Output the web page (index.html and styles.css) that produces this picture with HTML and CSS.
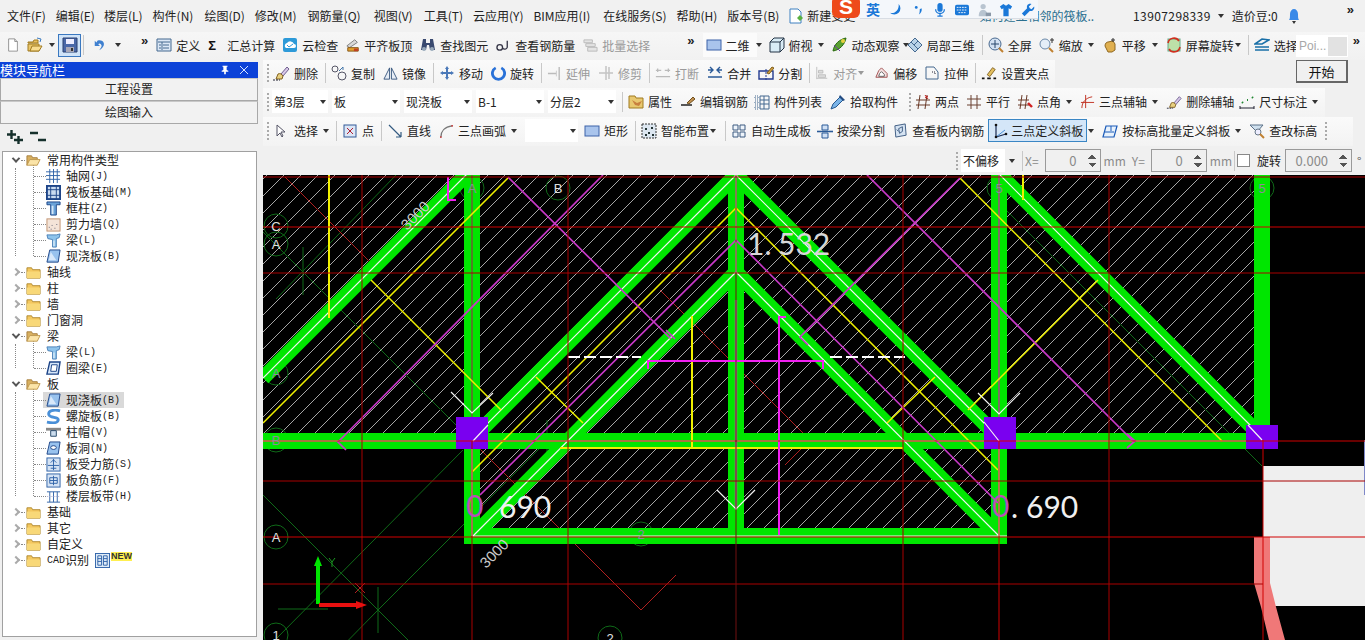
FILE: index.html
```html
<!DOCTYPE html>
<html lang="zh">
<head>
<meta charset="utf-8">
<title>钢筋算量</title>
<link rel="stylesheet" href="styles.css">
</head>
<body>
<svg class="defs" aria-hidden="true">
<defs>
<symbol id="new" viewBox="0 0 16 16"><path d="M3 1h7l3 3v11H3z" fill="#fff" stroke="#8a8a8a"/><path d="M10 1v3h3" fill="#ddd" stroke="#8a8a8a"/></symbol>
<symbol id="open" viewBox="0 0 16 16"><path d="M1 5h5l1-2h4v3H1z" fill="#e8c060" stroke="#a07a20"/><path d="M1 14V7h11v7z" fill="#eac66a" stroke="#a07a20"/><path d="M3 14l2-5h10l-3 5z" fill="#f8dc90" stroke="#a07a20"/><path d="M10 1l4 1-1 3" fill="none" stroke="#3a7ac0"/></symbol>
<symbol id="save" viewBox="0 0 16 16"><path d="M1 1h14v14H1z" fill="#4a68a8" stroke="#2a4070"/><path d="M4 2h8v5H4z" fill="#eef"/><path d="M4 10h8v5H4z" fill="#a8a8b8"/><path d="M9 11h2v3H9z" fill="#333"/></symbol>
<symbol id="undo" viewBox="0 0 16 16"><path d="M5 3c5-2 9 2 7 6-1 2-3 4-5 5 2-3 4-5 2-7-1-1-2-1-3 0l2 2H2V3l2 2z" fill="#3f80d0"/></symbol>
<symbol id="def" viewBox="0 0 16 16"><path d="M1 2h14v12H1z" fill="#dbe7f5" stroke="#44688f"/><path d="M2 5h12M6 5v8M7 8h6M7 11h6M3 8h2M3 11h2" stroke="#44688f"/></symbol>
<symbol id="cloud" viewBox="0 0 16 16"><rect x="1" y="1" width="14" height="14" rx="2" fill="#2d9ad8"/><path d="M3 10a3 3 0 0 1 2-4 4 4 0 0 1 7 1 2 2 0 0 1 0 4H4z" fill="#fff"/><path d="M5 8l2 2 4-3" stroke="#2d9ad8" fill="none"/></symbol>
<symbol id="level" viewBox="0 0 16 16"><path d="M1 9l9-7 3 3-9 6z" fill="#d8d8d8" stroke="#777"/><path d="M2 11h12v4H2z" fill="#e0a030" stroke="#805010"/><path d="M9 12h5v3H9z" fill="#c04020"/></symbol>
<symbol id="bino" viewBox="0 0 16 16"><path d="M3 2h3v4h4V2h3l2 11h-5l-1-5H7l-1 5H1z" fill="#3a4a70"/><circle cx="4" cy="12" r="2" fill="#9ab"/><circle cx="12" cy="12" r="2" fill="#9ab"/></symbol>
<symbol id="rebar" viewBox="0 0 16 16"><circle cx="4" cy="10" r="3" fill="none" stroke="#334" stroke-width="1.4"/><path d="M12 3v7a3 3 0 0 1-5 1" fill="none" stroke="#334" stroke-width="1.4"/></symbol>
<symbol id="batch" viewBox="0 0 16 16"><path d="M1 2h9v3H1zM3 6h10v3H3zM5 10h10v4H5z" fill="#e4e4e4" stroke="#bbb"/></symbol>
<symbol id="rect" viewBox="0 0 16 16"><rect x="1" y="3" width="14" height="10" fill="#a9c4ec" stroke="#3c62a8"/></symbol>
<symbol id="box" viewBox="0 0 16 16"><path d="M1 5l4-4h10v10l-4 4H1z" fill="#d9ecf6" stroke="#234"/><path d="M1 5h10v10M11 5l4-4" fill="none" stroke="#234"/></symbol>
<symbol id="orbit" viewBox="0 0 16 16"><path d="M1 14c1-7 7-12 13-13-1 6-6 12-13 13z" fill="#58a030" stroke="#2a6a10"/><circle cx="11" cy="4" r="2" fill="#e8d040"/><path d="M2 8l6 6" stroke="#7040a0"/></symbol>
<symbol id="local" viewBox="0 0 16 16"><path d="M1 8l7-7 7 7-7 7z" fill="#b9d3e8" stroke="#44688f"/><path d="M4 5l7 7M8 1l4 4M7 8l4-4" stroke="#44688f"/></symbol>
<symbol id="full" viewBox="0 0 16 16"><circle cx="7" cy="7" r="6" fill="#d4e2f2" stroke="#4a6a90"/><path d="M7 3v8M3 7h8" stroke="#29466a"/><path d="M11 11l4 4" stroke="#c08030" stroke-width="2"/></symbol>
<symbol id="zoom" viewBox="0 0 16 16"><circle cx="6" cy="7" r="5" fill="#e4eef8" stroke="#6a88a8"/><path d="M10 11l4 4" stroke="#c08030" stroke-width="2"/><path d="M13 1v5M11 3h4" stroke="#333"/></symbol>
<symbol id="pan" viewBox="0 0 16 16"><path d="M3 9c0-3 2-4 3-4l5-1 2 3v6l-3 2H6z" fill="#e0b050" stroke="#906820"/><path d="M11 1v4M9 3h4" stroke="#333"/></symbol>
<symbol id="srot" viewBox="0 0 16 16"><rect x="2" y="2" width="12" height="12" fill="#bde0a8" stroke="#6a8"/><path d="M2 6a6 6 0 0 1 11-2M14 10a6 6 0 0 1-11 2" fill="none" stroke="#d03020" stroke-width="1.6"/></symbol>
<symbol id="layers" viewBox="0 0 16 16"><path d="M1 7l7-5 7 1-7 4zM1 10h14M1 13h14" fill="none" stroke="#1a70a8" stroke-width="1.6"/></symbol>
<symbol id="brush" viewBox="0 0 18 16"><path d="M9 9l6-7 2 2-6 7z" fill="#d8c8e8" stroke="#706090"/><path d="M6 9c2-1 4 0 5 2l-1 3H4z" fill="#e8d080" stroke="#806020"/><path d="M1 15h7" stroke="#223" stroke-dasharray="2 1"/></symbol>
<symbol id="copy" viewBox="0 0 16 16"><circle cx="4" cy="4" r="3" fill="none" stroke="#556"/><circle cx="11" cy="11" r="4" fill="none" stroke="#556"/><path d="M8 6l4-4M12 2v3" stroke="#47a" fill="none"/></symbol>
<symbol id="mirror" viewBox="0 0 16 16"><path d="M1 14L7 2v12zM15 14L9 2v12z" fill="#e8eef6" stroke="#3c5a80"/></symbol>
<symbol id="move" viewBox="0 0 16 16"><path d="M8 1l2 3H9v3h3V6l3 2-3 2V9H9v3h1l-2 3-2-3h1V9H4v1L1 8l3-2v1h3V4H6z" fill="#4a78b8"/></symbol>
<symbol id="rot" viewBox="0 0 16 16"><path d="M5 2a6.5 6.5 0 1 0 6 0" fill="none" stroke="#2a72d8" stroke-width="3"/></symbol>
<symbol id="ext" viewBox="0 0 16 16"><path d="M1 8h9M13 1v14" stroke="#bbb" stroke-width="1.5"/><path d="M10 5v6" stroke="#ccc"/></symbol>
<symbol id="trim" viewBox="0 0 16 16"><path d="M1 8h14M8 1v14M11 2v12" stroke="#c4c4c4" stroke-width="1.5"/></symbol>
<symbol id="brk" viewBox="0 0 18 16"><path d="M1 5h6M11 5h6M1 12h16M3 3v4M15 3v4" stroke="#bbb" stroke-width="1.5"/></symbol>
<symbol id="merge" viewBox="0 0 16 16"><path d="M1 12h14M1 5h5M10 5h5M3 2l3 3-3 3M13 2l-3 3 3 3" fill="none" stroke="#2a5a98" stroke-width="1.4"/></symbol>
<symbol id="split" viewBox="0 0 16 16"><path d="M1 6h14v8H1z" fill="none" stroke="#223a90" stroke-width="1.4"/><path d="M8 4v11" stroke="#223a90" stroke-dasharray="2 1"/><path d="M9 8l5-6 2 1-5 6z" fill="#d0a040" stroke="#806020"/></symbol>
<symbol id="align" viewBox="0 0 16 16"><path d="M2 1v14M2 14h12" stroke="#bbb"/><path d="M4 5h5v3H4zM4 10h8v3H4z" fill="#ddd" stroke="#bbb"/></symbol>
<symbol id="offset" viewBox="0 0 16 16"><path d="M2 12l3-7 3-3 3 3 3 3v4z" fill="#f4e0e0" stroke="#a05050"/><path d="M5 11l1-3 2-2 3 3v2z" fill="#fff" stroke="#606060"/></symbol>
<symbol id="stretch" viewBox="0 0 16 16"><path d="M2 2h8l4 5v7H2z" fill="none" stroke="#44688f"/><path d="M8 7h3v3" fill="none" stroke="#223" stroke-dasharray="1 1"/></symbol>
<symbol id="grip" viewBox="0 0 18 16"><path d="M7 10l6-8 3 2-6 8z" fill="#e4c060" stroke="#806020"/><path d="M1 14h3M7 14h4M14 14h3" stroke="#111" stroke-width="2"/></symbol>
<symbol id="attr" viewBox="0 0 16 16"><path d="M1 2h6l1 2h7v10H1z" fill="#e8c870" stroke="#a07a20"/><path d="M4 6l5 3 5-2-3 5-4-1z" fill="#c88040"/></symbol>
<symbol id="edit" viewBox="0 0 16 16"><path d="M1 11h11" stroke="#222" stroke-width="1.5"/><path d="M7 9l6-6 2 2-6 5z" fill="#c09050" stroke="#705020"/></symbol>
<symbol id="list" viewBox="0 0 16 16"><path d="M1 2h3v3H1zM1 7h3v3H1zM1 12h3v3H1z" fill="none" stroke="#44688f" stroke-dasharray="1 1"/><path d="M6 2h9v13H6zM6 6h9M6 10h9M10 2v13" fill="none" stroke="#44688f"/></symbol>
<symbol id="pick" viewBox="0 0 16 16"><path d="M1 15l2-5 7-7 3 3-7 7z" fill="#7ab4e8" stroke="#27588f"/><path d="M10 1l5 5-2 1-4-4z" fill="#224a80"/></symbol>
<symbol id="twop" viewBox="0 0 16 16"><path d="M5 1L3 15M12 1l-2 14M1 6h14M1 11h14" stroke="#6a3a28"/><path d="M10 1l3 4M13 2l-3 2" stroke="#c02020"/></symbol>
<symbol id="para" viewBox="0 0 16 16"><path d="M5 1v14M11 1v14M1 5h14M1 11h14" stroke="#6a4030"/></symbol>
<symbol id="angle" viewBox="0 0 16 16"><path d="M5 1L3 15M10 1L8 15M1 6h11M1 11h11" stroke="#6a3a28"/><path d="M11 9l4 4" stroke="#d02020" stroke-width="2.4"/></symbol>
<symbol id="axis3" viewBox="0 0 16 16"><path d="M2 15c0-6 4-11 11-12" fill="none" stroke="#c03020"/><path d="M6 1v14M1 9h14" stroke="#c03020"/></symbol>
<symbol id="dim" viewBox="0 0 16 16"><path d="M1 12v3M15 12v3M1 14h14" stroke="#223"/><path d="M3 8l1 1M8 6h1M13 3l1 1" stroke="#283" stroke-width="2"/></symbol>
<symbol id="cursor" viewBox="0 0 16 16"><path d="M5 2v11l3-3 2 4 1-1-2-4h4z" fill="#fff" stroke="#556"/></symbol>
<symbol id="point" viewBox="0 0 16 16"><rect x="2" y="2" width="12" height="12" fill="#dce6f6" stroke="#335a98"/><path d="M5 5l6 6M11 5l-6 6" stroke="#b02030"/></symbol>
<symbol id="line" viewBox="0 0 16 16"><path d="M2 2l12 12M14 14V9M14 14H9" fill="none" stroke="#335a80" stroke-width="1.2"/></symbol>
<symbol id="arc" viewBox="0 0 16 16"><path d="M2 15c0-6 4-11 12-12" fill="none" stroke="#777" stroke-width="1.4"/><circle cx="2" cy="15" r="1" fill="#c03030"/><circle cx="14" cy="3" r="1" fill="#c03030"/></symbol>
<symbol id="smart" viewBox="0 0 16 16"><rect x="1" y="1" width="14" height="14" fill="#dce6f0" stroke="#333" stroke-dasharray="2 1"/><path d="M4 5h2v2H4zM10 4h2v2h-2zM7 9h2v2H7zM4 11h2v2H4zM11 11h2v2h-2z" fill="#233"/></symbol>
<symbol id="auto" viewBox="0 0 16 16"><path d="M2 2h5v5H2zM9 2h5v5H9zM2 9h5v5H2zM9 9h5v5H9z" fill="#eef4fb" stroke="#3c5a80"/></symbol>
<symbol id="bsplit" viewBox="0 0 16 16"><path d="M5 2h6v5H5zM5 10h6v5H5z" fill="#d0e0f4" stroke="#2a5a98"/><path d="M0 8.500h16" stroke="#2a5a98" stroke-width="1.600"/></symbol>
<symbol id="vrebar" viewBox="0 0 16 16"><path d="M2 3l11-2 1 12-11 2z" fill="#d5e3f2" stroke="#3c5a80"/><path d="M6 6l4-2v5l-3 2zM6 9l-2-2" fill="none" stroke="#3c5a80"/></symbol>
<symbol id="three" viewBox="0 0 16 16"><path d="M3 1v13l10-3" fill="none" stroke="#1a2a50" stroke-width="1.200"/><path d="M3 14l9-7" stroke="#4a90d8"/><circle cx="3" cy="2" r="1.300" fill="#111"/><circle cx="3" cy="14" r="1.300" fill="#111"/><circle cx="13" cy="11" r="1.300" fill="#111"/></symbol>
<symbol id="slope" viewBox="0 0 16 16"><path d="M4 3h11l-3 11H1z" fill="#e8f2fc" stroke="#1a5ab8" stroke-width="1.200"/><path d="M3 9h9M9 3v5" stroke="#1a5ab8"/></symbol>
<symbol id="elev" viewBox="0 0 16 16"><path d="M1 2h13L8 9z" fill="#cfe0ee" stroke="#5a7088"/><circle cx="9" cy="9" r="3" fill="#eef" stroke="#678"/><path d="M11 11l4 4" stroke="#c08030" stroke-width="2"/></symbol>
<symbol id="t-grid" viewBox="0 0 16 16"><path d="M4 0v15M8 0v15M12 0v15M0 3h15M0 7h15M0 11h15" stroke="#2f62a8"/></symbol>
<symbol id="t-raft" viewBox="0 0 16 16"><rect x="1" y="1" width="14" height="14" fill="#c8daf0" stroke="#1d4488" stroke-width="2"/><path d="M1 5h14M1 11h14M5 1v14M11 1v14" stroke="#1d4488"/></symbol>
<symbol id="t-col" viewBox="0 0 16 16"><path d="M1 1h14v3h-4v11H5V4H1z" fill="#6aa2d8" stroke="#1d4488"/><path d="M6 5h2v9H6z" fill="#d5e6f6"/></symbol>
<symbol id="t-wall" viewBox="0 0 16 16"><rect x="1" y="2" width="14" height="13" fill="#f4e4d8" stroke="#c09070"/><path d="M3 11h1M6 9h1M9 12h1M5 13h1M11 8h1" stroke="#667"/></symbol>
<symbol id="t-beam" viewBox="0 0 16 16"><path d="M1 2l10 0 4-1-1 4-3 1v9H7V7L2 6z" fill="#8fc4ec" stroke="#4a80b8"/><path d="M8 8h1v6H8z" fill="#fff"/></symbol>
<symbol id="t-slab" viewBox="0 0 16 16"><path d="M4 1h11l-2 13H1z" fill="#98c2ee" stroke="#1d4488"/><path d="M5 3l-2 9h8z" fill="#d8e8fa"/></symbol>
<symbol id="t-ring" viewBox="0 0 16 16"><path d="M4 1h11l-2 13H1z" fill="#d8e8fa" stroke="#1d4488" stroke-width="1.500"/><path d="M6 4h6l-1 7H5z" fill="#fff" stroke="#1d4488"/></symbol>
<symbol id="t-spiral" viewBox="0 0 16 16"><path d="M15 2C8 0 2 2 3 6s11 2 10 6-7 3-12 2" fill="none" stroke="#4a90d8" stroke-width="3"/></symbol>
<symbol id="t-cap" viewBox="0 0 16 16"><path d="M0 3h16v3H0z" fill="#888"/><path d="M5 6h6v6H5z" fill="#cde" stroke="#246"/></symbol>
<symbol id="t-hole" viewBox="0 0 16 16"><path d="M4 1h11l-2 13H1z" fill="#98c2ee" stroke="#1d4488"/><ellipse cx="8" cy="7" rx="3" ry="2" fill="#fff" stroke="#1d4488"/></symbol>
<symbol id="t-bar1" viewBox="0 0 16 16"><rect x="1" y="1" width="14" height="14" fill="#d5e3f4" stroke="#2f62a8"/><path d="M8 2v12M2 9h12M5 6l3-3 3 3M5 12h6" fill="none" stroke="#2f62a8"/></symbol>
<symbol id="t-bar2" viewBox="0 0 16 16"><rect x="1" y="1" width="14" height="14" fill="#d5e3f4" stroke="#2f62a8"/><path d="M4 5h8v6H4zM8 3v10M4 8h8" fill="none" stroke="#2f62a8"/></symbol>
<symbol id="t-band" viewBox="0 0 16 16"><path d="M1 3h14M1 14h14M4 3v11M8 3v11M12 3v11" stroke="#2f62a8"/><path d="M1 8h14" stroke="#aac" stroke-dasharray="1 1"/></symbol>
<symbol id="f-open" viewBox="0 0 16 16"><path d="M1 13V3h5l1 2h5v2H5z" fill="#d8b060" stroke="#a88040"/><path d="M1 13l3-6h11l-3 6z" fill="#fbe4a8" stroke="#c09a50"/></symbol>
<symbol id="f-closed" viewBox="0 0 16 16"><path d="M1 14V3h5l1 2h8v9z" fill="#f4c860" stroke="#b08a30"/><path d="M1 7h14v7H1z" fill="#f8d878"/></symbol>
<symbol id="cad" viewBox="0 0 16 16"><rect x="0.500" y="0.500" width="15" height="15" fill="#e0ecf8" stroke="#2f62a8"/><path d="M3 3h4v10H3zM9 3h4v10H9zM3 6h4M3 9h4M9 6h4M9 9h4" fill="none" stroke="#2f62a8"/></symbol>
<symbol id="bell" viewBox="0 0 16 16"><path d="M3 12c1-1 1-3 1-6s2-5 4-5 4 2 4 5 0 5 1 6z" fill="#3a8ae8"/><path d="M6 13h4l-2 3z" fill="#333"/></symbol>
<symbol id="newdoc" viewBox="0 0 16 16"><path d="M2 1h8l3 3v11H2z" fill="#fff" stroke="#3f80c0"/><path d="M9 10l3-3 3 3-3 3z" fill="#58b040"/></symbol>
</defs>
</svg>

<div class="app">
  <header class="menubar">
    <span>文件(F)</span><span class="mn1">编辑(E)</span><span>楼层(L)</span><span class="mp1">构件(N)</span><span>绘图(D)</span><span class="mp1">修改(M)</span><span class="mp3">钢筋量(Q)</span><span class="mp1">视图(V)</span><span>工具(T)</span><span>云应用(Y)</span><span class="mp3">BIM应用(I)</span><span>在线服务(S)</span><span>帮助(H)</span><span class="mn1">版本号(B)</span>
    <span class="newchange"><svg class="i"><use href="#newdoc"/></svg>新建变更</span>
    <span class="topic">如何建立相邻的筏板..</span>
    <span class="phone">13907298339</span><i class="dd phone-dd"></i>
    <span class="beans">造价豆:0</span>
    <svg class="i bell"><use href="#bell"/></svg>
    <b class="chev chev-top">»</b>
  </header>

  <div class="ime">
    <span class="ime-logo">S</span>
    <b class="ime-lang">英</b>
    <svg class="ime-i moon" viewBox="0 0 16 16"><path d="M11 1a7 7 0 1 1-10 10c5 2 11-3 10-10z" fill="#1a78d8"/></svg>
    <svg class="ime-i dots" viewBox="0 0 16 16"><circle cx="6" cy="5" r="1.600" fill="#1a78d8"/><path d="M12 6c1 3-1 6-3 7 1-2 1-4 1-6z" fill="#1a78d8"/></svg>
    <svg class="ime-i" viewBox="0 0 16 16"><rect x="5" y="0" width="6" height="10" rx="3" fill="#1a78d8"/><path d="M3 7a5 5 0 0 0 10 0M8 12v3M5 15h6" fill="none" stroke="#1a78d8" stroke-width="1.500"/></svg>
    <svg class="ime-i" viewBox="0 0 16 16"><rect x="0" y="2" width="16" height="12" rx="2" fill="#1a78d8"/><path d="M2 5h12M2 8h12M4 11h8" stroke="#fff" stroke-dasharray="2 1"/></svg>
    <svg class="ime-i" viewBox="0 0 16 16"><circle cx="7" cy="4" r="3" fill="#b8c4d0"/><path d="M2 15c0-5 2-7 5-7s5 2 5 7z" fill="#b8c4d0"/><path d="M10 11h6v4h-6z" fill="#8a98a8"/></svg>
    <svg class="ime-i" viewBox="0 0 16 16"><path d="M5 1L1 4l2 3 2-1v9h6V6l2 1 2-3-4-3-3 2z" fill="#1a78d8"/></svg>
    <svg class="ime-i" viewBox="0 0 16 16"><path d="M15 4l-3 3-2-1-1-2 3-3C8 0 6 3 7 6L1 12l3 3 6-6c3 1 6-2 5-5z" fill="#1a78d8"/></svg>
  </div>

  <div class="toolbar tb-main">
    <svg class="i small-new"><use href="#new"/></svg>
    <svg class="i"><use href="#open"/></svg><i class="dd dd-open"></i>
    <span class="savebtn"><svg class="i"><use href="#save"/></svg></span>
    <i class="sep sep-save"></i>
    <svg class="i undo"><use href="#undo"/></svg><i class="dd dd-undo"></i>
    <b class="chev chev-a">»</b>
    <span class="it"><svg class="i"><use href="#def"/></svg>定义</span>
    <span class="it sigma"><b class="sig">Σ</b>汇总计算</span>
    <span class="it"><svg class="i"><use href="#cloud"/></svg>云检查</span>
    <span class="it"><svg class="i i14"><use href="#level"/></svg>平齐板顶</span>
    <span class="it"><svg class="i"><use href="#bino"/></svg>查找图元</span>
    <span class="it"><svg class="i i15"><use href="#rebar"/></svg>查看钢筋量</span>
    <span class="it off"><svg class="i i15"><use href="#batch"/></svg>批量选择</span>
    <b class="chev chev-b">»</b>
    <span class="it view2d"><svg class="i"><use href="#rect"/></svg>二维</span><i class="dd dd-2d"></i>
    <span class="it"><svg class="i"><use href="#box"/></svg>俯视</span><i class="dd"></i>
    <span class="it m9"><svg class="i"><use href="#orbit"/></svg>动态观察</span><i class="dd dd-tight"></i>
    <span class="it"><svg class="i"><use href="#local"/></svg>局部三维</span>
    <i class="sep sep-tight"></i>
    <span class="it m7"><svg class="i"><use href="#full"/></svg>全屏</span>
    <span class="it"><svg class="i"><use href="#zoom"/></svg>缩放</span><i class="dd"></i>
    <span class="it m9"><svg class="i"><use href="#pan"/></svg>平移</span><i class="dd"></i>
    <span class="it"><svg class="i"><use href="#srot"/></svg>屏幕旋转</span><i class="dd dd-near"></i>
    <i class="sep"></i>
    <span class="it"><svg class="i"><use href="#layers"/></svg>选择</span>
    <b class="chev chev-c">»</b>
  </div>

  <div class="popup">
    <div class="pop-head"><span>Poi...</span><i class="pop-x"></i></div>
    <button class="pop-btn" type="button">开始</button>
  </div>

  <main class="main">
    <aside class="panel">
      <div class="panel-title"><span>模块导航栏</span>
        <svg class="pt-i pin" viewBox="0 0 10 12"><path d="M2 1h6v1H7v4l2 1v1H6v3H4V8H1V7l2-1V2H2z" fill="#fff"/></svg>
        <svg class="pt-i" viewBox="0 0 10 10"><path d="M1 1l8 8M9 1l-8 8" stroke="#d8e4ff"/></svg>
      </div>
      <div class="panel-btn">工程设置</div>
      <div class="panel-btn">绘图输入</div>
      <div class="tree-tools">
        <svg class="tt" viewBox="0 0 16 14"><path d="M0 4.500h9M4.500 0v9M7 10h9M11.500 6v8" stroke="#16302c" stroke-width="2.400"/></svg>
        <svg class="tt" viewBox="0 0 16 14"><path d="M0 3h8M8 10h8" stroke="#16302c" stroke-width="2.400"/></svg>
      </div>
      <div class="tree">
        <div class="t open"><i class="tw"></i><svg class="f"><use href="#f-open"/></svg>常用构件类型</div>
        <div class="group">
          <div class="c"><svg class="f"><use href="#t-grid"/></svg>轴网<span class="lat">(J)</span></div>
          <div class="c"><svg class="f"><use href="#t-raft"/></svg>筏板基础<span class="lat">(M)</span></div>
          <div class="c"><svg class="f"><use href="#t-col"/></svg>框柱<span class="lat">(Z)</span></div>
          <div class="c"><svg class="f"><use href="#t-wall"/></svg>剪力墙<span class="lat">(Q)</span></div>
          <div class="c"><svg class="f"><use href="#t-beam"/></svg>梁<span class="lat">(L)</span></div>
          <div class="c"><svg class="f"><use href="#t-slab"/></svg>现浇板<span class="lat">(B)</span></div>
        </div>
        <div class="t"><i class="tw"></i><svg class="f"><use href="#f-closed"/></svg>轴线</div>
        <div class="t"><i class="tw"></i><svg class="f"><use href="#f-closed"/></svg>柱</div>
        <div class="t"><i class="tw"></i><svg class="f"><use href="#f-closed"/></svg>墙</div>
        <div class="t"><i class="tw"></i><svg class="f"><use href="#f-closed"/></svg>门窗洞</div>
        <div class="t open"><i class="tw"></i><svg class="f"><use href="#f-open"/></svg>梁</div>
        <div class="group">
          <div class="c"><svg class="f"><use href="#t-beam"/></svg>梁<span class="lat">(L)</span></div>
          <div class="c"><svg class="f"><use href="#t-ring"/></svg>圈梁<span class="lat">(E)</span></div>
        </div>
        <div class="t open"><i class="tw"></i><svg class="f"><use href="#f-open"/></svg>板</div>
        <div class="group">
          <div class="c sel"><svg class="f"><use href="#t-slab"/></svg>现浇板<span class="lat">(B)</span></div>
          <div class="c"><svg class="f"><use href="#t-spiral"/></svg>螺旋板<span class="lat">(B)</span></div>
          <div class="c"><svg class="f"><use href="#t-cap"/></svg>柱帽<span class="lat">(V)</span></div>
          <div class="c"><svg class="f"><use href="#t-hole"/></svg>板洞<span class="lat">(N)</span></div>
          <div class="c"><svg class="f"><use href="#t-bar1"/></svg>板受力筋<span class="lat">(S)</span></div>
          <div class="c"><svg class="f"><use href="#t-bar2"/></svg>板负筋<span class="lat">(F)</span></div>
          <div class="c"><svg class="f"><use href="#t-band"/></svg>楼层板带<span class="lat">(H)</span></div>
        </div>
        <div class="t"><i class="tw"></i><svg class="f"><use href="#f-closed"/></svg>基础</div>
        <div class="t"><i class="tw"></i><svg class="f"><use href="#f-closed"/></svg>其它</div>
        <div class="t"><i class="tw"></i><svg class="f"><use href="#f-closed"/></svg>自定义</div>
        <div class="t"><i class="tw"></i><svg class="f"><use href="#f-closed"/></svg><span class="lat">CAD</span>识别<svg class="f cad"><use href="#cad"/></svg><b class="newtag">NEW</b></div>
      </div>
    </aside>

    <section class="work">
      <div class="toolbar row r2">
        <i class="grip"></i>
        <span class="it"><svg class="i i18"><use href="#brush"/></svg>删除</span><i class="sep"></i>
        <span class="it"><svg class="i"><use href="#copy"/></svg>复制</span>
        <span class="it"><svg class="i i15"><use href="#mirror"/></svg>镜像</span><i class="sep"></i>
        <span class="it"><svg class="i"><use href="#move"/></svg>移动</span>
        <span class="it"><svg class="i i15"><use href="#rot"/></svg>旋转</span><i class="sep"></i>
        <span class="it off"><svg class="i i15"><use href="#ext"/></svg>延伸</span>
        <span class="it off"><svg class="i"><use href="#trim"/></svg>修剪</span><i class="sep"></i>
        <span class="it off"><svg class="i"><use href="#brk"/></svg>打断</span>
        <span class="it m7"><svg class="i"><use href="#merge"/></svg>合并</span>
        <span class="it"><svg class="i"><use href="#split"/></svg>分割</span><i class="sep"></i>
        <span class="it off"><svg class="i i14"><use href="#align"/></svg>对齐</span><i class="dd dd-near off-dd"></i>
        <span class="it m7"><svg class="i i15"><use href="#offset"/></svg>偏移</span>
        <span class="it"><svg class="i"><use href="#stretch"/></svg>拉伸</span><i class="sep"></i>
        <span class="it"><svg class="i"><use href="#grip"/></svg>设置夹点</span>
      </div>
      <div class="toolbar row r3">
        <i class="grip"></i>
        <span class="combo cw56">第3层</span><i class="dd dd-combo"></i>
        <span class="combo cw68">板</span><i class="dd dd-combo"></i>
        <span class="combo cw68">现浇板</span><i class="dd dd-combo"></i>
        <span class="combo cw68">B-1</span><i class="dd dd-combo"></i>
        <span class="combo cw68">分层2</span><i class="dd dd-combo"></i>
        <i class="sep sep-c"></i>
        <span class="it"><svg class="i"><use href="#attr"/></svg>属性</span>
        <span class="it m6"><svg class="i"><use href="#edit"/></svg>编辑钢筋</span>
        <span class="it"><svg class="i"><use href="#list"/></svg>构件列表</span>
        <span class="it"><svg class="i"><use href="#pick"/></svg>拾取构件</span>
        <i class="grip grip-mid"></i>
        <span class="it m7"><svg class="i"><use href="#twop"/></svg>两点</span>
        <span class="it m7"><svg class="i"><use href="#para"/></svg>平行</span>
        <span class="it"><svg class="i"><use href="#angle"/></svg>点角</span><i class="dd"></i>
        <span class="it"><svg class="i i15"><use href="#axis3"/></svg>三点辅轴</span><i class="dd"></i>
        <span class="it m5"><svg class="i"><use href="#brush"/></svg>删除辅轴</span>
        <span class="it"><svg class="i"><use href="#dim"/></svg>尺寸标注</span><i class="dd"></i>
      </div>
      <div class="toolbar row r4">
        <i class="grip"></i>
        <span class="it sel-tool"><svg class="i"><use href="#cursor"/></svg>选择</span><i class="dd"></i><i class="sep"></i>
        <span class="it"><svg class="i"><use href="#point"/></svg>点</span><i class="sep"></i>
        <span class="it"><svg class="i"><use href="#line"/></svg>直线</span>
        <span class="it"><svg class="i i15"><use href="#arc"/></svg>三点画弧</span><i class="dd dd-arc"></i>
        <span class="combo cw53"></span><i class="dd dd-combo dd-cb2"></i>
        <span class="it"><svg class="i"><use href="#rect"/></svg>矩形</span><i class="sep"></i>
        <span class="it"><svg class="i"><use href="#smart"/></svg>智能布置</span><i class="dd dd-sm"></i><i class="sep"></i>
        <span class="it m6"><svg class="i"><use href="#auto"/></svg>自动生成板</span>
        <span class="it"><svg class="i"><use href="#bsplit"/></svg>按梁分割</span>
        <span class="it m4"><svg class="i i15"><use href="#vrebar"/></svg>查看板内钢筋</span>
        <span class="it active"><svg class="i"><use href="#three"/></svg>三点定义斜板</span><i class="dd dd-near"></i>
        <span class="it"><svg class="i"><use href="#slope"/></svg>按标高批量定义斜板</span><i class="dd"></i>
        <span class="it"><svg class="i"><use href="#elev"/></svg>查改标高</span>
        <i class="grip"></i>
      </div>
      <div class="toolbar row r5">
        <i class="grip"></i>
        <span class="combo cw44">不偏移</span><i class="dd dd-plain"></i><i class="sep sep-x"></i>
        <span class="lbl lbl-x">X=</span><span class="spin"><span>0</span><i class="updown"></i></span><span class="lbl">mm</span>
        <span class="lbl lbl-x y">Y=</span><span class="spin"><span>0</span><i class="updown"></i></span><span class="lbl">mm</span>
        <i class="sep sep-r"></i><i class="check"></i><span class="rot-l">旋转</span>
        <span class="spin wide"><span>0.000</span><i class="updown"></i></span><span class="lbl deg">°</span>
      </div>

      <div class="canvas">
        <svg class="cad-view" viewBox="263 175 1102 465">
          <defs>
            <pattern id="hatch" width="17" height="17" patternUnits="userSpaceOnUse">
              <path d="M-1 18L18 -1" stroke="#cfcfcf" stroke-width="0.800"/>
            </pattern>
          </defs>
          <rect x="263" y="175" width="1102" height="465" fill="#000"/>
          <path d="M263 175H1262V440H1000V530H473V440H263z" fill="url(#hatch)"/>
          <rect x="1263" y="466" width="102" height="140" fill="#efefef"/>
          <path d="M1254 537h16v46l6 24 9 33h-16l-8-33-7-24z" fill="#f07878"/>
          <path d="M1364.500 440v55" stroke="#7f88c8"/>

          <g stroke="#0f6a18" fill="none" stroke-width="1">
            <path d="M263 232L276 245L600 569M263 495L408 640M463 450L275 640M540 448L378 610L275 715M276 299L396 175M996 200L1262 466M547 420v43M303 247v48M378 587v46M278 609h50"/>
            <circle cx="276" cy="226" r="12"/><circle cx="276" cy="244" r="12"/><circle cx="276" cy="373" r="12"/><circle cx="276" cy="440" r="12"/><circle cx="472" cy="188" r="12"/><circle cx="558" cy="188" r="12"/><circle cx="999" cy="188" r="12"/><circle cx="1262" cy="188" r="12"/><circle cx="276" cy="537" r="12"/><circle cx="276" cy="635" r="12"/><circle cx="641" cy="534" r="12"/><circle cx="610" cy="638" r="12"/>
          </g>
          <g stroke="#b02020" fill="none" stroke-width="1">
            <path d="M285 177L371 263M472 441L641 610L676 575M660 290L810 440L785 465M355 583l10 10M365 583l-10 10"/>
          </g>

          <g stroke="#00e600" fill="none" stroke-width="16">
            <path d="M263 441H1262M472 175V544M464 536H1007M736 175V530M999 175V544M1262 175V440"/>
          </g>
          <g stroke="#00e600" fill="none" stroke-width="15">
            <path d="M470 171L263 378M736 175L471 440M736 175L1001 440M736 272L473 536M736 272L999 536M996 171L1262 437"/>
          </g>
          <g stroke="#f4f4f4" fill="none" stroke-width="1.200">
            <path d="M470 171L263 378M736 175L471 440M736 175L1001 440M736 272L473 536M736 272L999 536M996 171L1262 437"/>
            <path d="M263 441H1262M472 441V536M472 536H1007M999 441V536M736 175V272"/>
          </g>
          <path d="M736 300V510" stroke="#8c8c8c" stroke-width="2.500"/>
          <path d="M472 175V417" stroke="#8a3a40" stroke-width="1.200"/>
          <path d="M999 175V417" stroke="#d818a8" stroke-width="1.200"/>

          <g stroke="#f0f000" fill="none" stroke-width="1.500">
            <path d="M263 423L508 178M371 280L501 410M736 208L472 472M736 208L998 470M536 377L583 423M887 423L935 377M968 410L1098 280M960 178L1222 441"/>
          </g>
          <g stroke="#f0f000" fill="none" stroke-width="2">
            <path d="M329 175V318M692 316V449M1023 175V200M560 448H903"/>
          </g>
          <g stroke="#c838c8" fill="none" stroke-width="1.700">
            <path d="M346 434L338 442L346 450M338 442L603 175M508 177L671 339M736 240L480 495M736 240L998 503M867 175L1133 441M1127 434L1135 441L1127 448M800 337L960 178M808 329L800 337L808 345M666 330l9 9"/>
          </g>
          <g stroke="#f020f0" fill="none" stroke-width="2">
            <path d="M648 369V361H823V369M786 317H779V535M448 177V200H456"/>
          </g>
          <path d="M568 357H641M830 357H905" stroke="#fff" stroke-width="2" stroke-dasharray="12 4" fill="none"/>

          <g fill="#7a00f0">
            <rect x="456" y="417" width="32" height="32"/>
            <rect x="984" y="417" width="32" height="32"/>
            <rect x="1246" y="425" width="32" height="24"/>
          </g>
          <g stroke="#f4f4f4" stroke-width="1.200" fill="none">
            <path d="M451 392L472 413L493 393M978 393L999 414L1020 393M717 490L736 509L755 490M984 422L999 441M1248 425L1262 440M473 441L488 425"/>
          </g>

          <g stroke="#a80000" stroke-width="1" fill="none">
            <path d="M263 177H1365M263 273H1365M263 481H1365M263 584H1263"/>
            <path d="M362 175V640M472 441V640M568 175V640M903 175V640M1109 175V640"/>
          </g>
          <g stroke="#d00000" stroke-width="1" fill="none">
            <path d="M263 227H1365M263 441H1365M263 537H1365M999 441V640M1263 440V640"/>
          </g>
          <path d="M736 175V640" stroke="#701010" stroke-width="1"/>

          <path d="M318 604V564" stroke="#00e600" stroke-width="4"/>
          <path d="M318 556l-4 10h8z" fill="#00e600"/>
          <path d="M319 605H358" stroke="#e81010" stroke-width="4"/>
          <path d="M367 605l-11-4v8z" fill="#e81010"/>
          <path d="M329 558l3 4 3-4M332 562v5" stroke="#1a9a20" fill="none"/>

          <g class="cad-lbl">
            <text x="276" y="231">C</text><text x="276" y="249">A</text><text x="276" y="378" class="dim-lbl">A</text><text x="276" y="445" class="dim-lbl">B</text>
            <text x="472" y="193" class="dim-lbl">A</text><text x="558" y="193">B</text><text x="999" y="193" class="dim-lbl">5</text><text x="1262" y="193" class="dim-lbl">5</text><text x="276" y="542">A</text><text x="276" y="640">1</text><text x="641" y="539" class="dim-lbl">2</text><text x="610" y="643">2</text>
          </g>
          <text class="cad-dim" transform="translate(407 231) rotate(-45)">3000</text>
          <text class="cad-dim" transform="translate(486 569) rotate(-45)">3000</text>
          <text class="cad-num num-wide" y="255"><tspan x="747">1.</tspan><tspan x="778">532</tspan></text>
          <text class="cad-num" x="499" y="518">690</text>
          <text class="cad-num" x="1026" y="518">690</text>
          <text class="cad-num" x="1011" y="518">.</text>
          <text class="cad-num zero" x="466" y="517">0</text>
          <text class="cad-num zero" x="992" y="517">0</text>
        </svg>
      </div>
    </section>
  </main>
</div>
</body>
</html>
```

FILE: styles.css
```css
* { box-sizing: border-box; }
html, body { margin: 0; padding: 0; height: 100%; overflow: hidden; }
body { background: #f0f0f0; font-family: "Noto Sans CJK SC", "Liberation Sans", sans-serif; font-size: 12px; color: #222; }
.defs { width: 0; height: 0; position: absolute; }

.app { width: 1365px; height: 640px; position: relative; display: flex; flex-direction: column; overflow: hidden; }

.menubar { height: 32px; display: flex; align-items: center; gap: 10px; padding-left: 7px; padding-bottom: 1px; flex: none; white-space: nowrap; background: #f1f1f1; }
.mn1 { margin-right: -1px; }
.mp1 { margin-right: 1px; }
.mp3 { margin-right: 3px; }
.newchange { display: flex; align-items: center; gap: 3px; }
.topic { margin-left: 114px; color: #2a6f8f; }
.phone { margin-left: 29px; letter-spacing: .4px; }
.bell { margin-left: -2px; }
.chev { flex: none; font-family: "Liberation Sans", sans-serif; font-size: 13px; line-height: 12px; align-self: flex-start; margin-top: 3px; }
.chev-top { margin: 0 0 12px 35px; align-self: center; }

.ime { position: absolute; left: 832px; top: 0; width: 206px; height: 19px; display: flex; align-items: center; padding-left: 34px; }
.ime::before { content: ""; position: absolute; left: 28px; right: 0; top: 0; bottom: 0; background: #f4f7fb; border-bottom: 1px solid #d8dde4; }
.ime-logo { position: absolute; left: 0; top: -4px; width: 28px; height: 22px; border-radius: 6px; background: #ee4a1a; color: #fff; font: bold 21px/22px "Liberation Sans", sans-serif; text-align: center; }
.ime-lang { position: relative; width: 15px; font-size: 14px; line-height: 19px; color: #1a78d8; }
.ime-i { position: relative; width: 14px; height: 14px; margin-left: 8px; flex: none; }

.toolbar { display: flex; align-items: center; white-space: nowrap; flex: none; padding-bottom: 2px; }
.tb-main { height: 28px; padding-left: 6px; background: linear-gradient(#f6f6f6, #f1f1f1); }
.row { background: linear-gradient(#fafafa, #f3f3f3); padding-left: 4px; }
.r2 { height: 28px; width: 792px; }
.r3 { height: 29px; width: 1062px; }
.r4 { height: 29px; width: 1090px; }
.r5 { height: 29px; width: 1102px; padding-left: 693px; padding-top: 2px; background: #f0f0f0; }

.it { display: inline-flex; align-items: center; gap: 4px; margin-right: 8px; height: 23px; flex: none; }
.m4 { margin-right: 4px; }
.m5 { margin-right: 5px; }
.m6 { margin-right: 6px; }
.m7 { margin-right: 7px; }
.m9 { margin-right: 9px; }
.off { color: #9a9a9a; }
.i { width: 16px; height: 16px; flex: none; }
.i14 { width: 14px; height: 14px; }
.i15 { width: 15px; height: 15px; }
.i18 { width: 18px; height: 16px; }
.small-new { width: 14px; margin-right: 7px; }
.undo { margin-left: 9px; width: 14px; }
.sigma { gap: 8px; margin-right: 7px; }
.sig { width: 11px; font: bold 13px "Liberation Sans", sans-serif; color: #111; }

.dd { width: 0; height: 0; flex: none; border: 3.5px solid transparent; border-top: 4px solid #333; border-bottom: 0; margin: 0 8px 0 -3px; }
.phone-dd { margin: 0 -2px 0 -3px; }
.dd-open { margin: 0 3px 0 6px; }
.dd-undo { margin: 0 0 0 8px; }
.dd-2d { margin: 0 7px 0 -1px; }
.dd-tight { margin: 0 -2px 0 -6px; }
.dd-near { margin: 0 8px 0 -7px; }
.dd-sm { margin: 0 10px 0 -7px; }
.dd-combo { margin: 0 6px 0 -8px; }
.dd-cb2 { margin: 0 8px 0 -8px; }
.dd-arc { margin: 0 8px 0 -3px; }
.dd-plain { margin: 0 7px 0 4px; }
.off-dd { border-top-color: #999; margin: 0 10px 0 -7px; }

.sep { width: 1px; height: 20px; background: #c8c8c8; flex: none; margin: 0 5px 0 -1px; }
.sep-save { margin: 0 0 0 2px; }
.sep-tight { margin: 0 5px 0 -1px; }
.sep-c { margin: 0 5px 0 2px; }
.sep-x { margin: 0 2px 0 0; }
.sep-r { margin: 0 2px 0 2px; }
.savebtn { width: 23px; height: 23px; display: flex; align-items: center; justify-content: center; background: #cfe3f8; border: 1px solid #3a78c0; }
.view2d { background: #fbfbfb; padding-left: 3px; padding-right: 7px; margin-right: 0; height: 24px; }
.chev-a { margin: 3px 8px 0 20px; }
.chev-b { margin: 3px 8px 0 29px; }
.chev-c { margin: 3px 0 0 47px; position: relative; z-index: 6; }

.grip { width: 2px; height: 18px; flex: none; margin-right: 3px; background: repeating-linear-gradient(#aaa 0 2px, transparent 2px 4px); }
.grip-mid { margin: 0 4px 0 3px; }

.combo { height: 23px; line-height: 23px; background: #fff; padding-left: 2px; flex: none; }
.cw56 { width: 56px; }
.cw68 { width: 68px; }
.cw53 { width: 53px; }
.cw44 { width: 44px; }

.active { width: 99px; height: 23px; background: #d4e6f8; border: 1px solid #3a86c4; padding-left: 4px; margin-right: 8px; gap: 2px; }
.sel-tool { gap: 6px; }

.lbl { color: #8a8a8a; flex: none; }
.lbl-x { margin-right: 5px; }
.y { margin-left: 6px; }
.spin { width: 56px; height: 23px; background: #f0f0f0; border: 1px solid #9a9a9a; display: flex; align-items: center; justify-content: flex-end; color: #8a8a8a; margin: 0 3px 0 1px; flex: none; font-size: 13px; }
.wide { width: 67px; margin: 0 5px 0 0; }
.updown { width: 14px; height: 16px; margin: 0 1px 0 8px; position: relative; flex: none; background:
  linear-gradient(135deg, transparent 50%, #555 50%) 3px 2px / 4px 4px no-repeat,
  linear-gradient(225deg, transparent 50%, #555 50%) 7px 2px / 4px 4px no-repeat,
  linear-gradient(45deg, transparent 50%, #555 50%) 3px 10px / 4px 4px no-repeat,
  linear-gradient(315deg, transparent 50%, #555 50%) 7px 10px / 4px 4px no-repeat; }
.check { width: 13px; height: 13px; background: #fff; border: 1px solid #888; flex: none; }
.rot-l { margin: 0 4px 0 7px; flex: none; }
.deg { color: #555; }

.popup { position: absolute; left: 1296px; top: 35px; width: 52px; z-index: 5; }
.pop-head { height: 22px; background: #fff; display: flex; align-items: center; justify-content: space-between; padding-left: 3px; color: #a8a8a8; font-family: "Liberation Sans", sans-serif; font-size: 12px; }
.pop-x { width: 19px; height: 19px; background: #e2e2e2; margin-right: 1px; }
.pop-btn { display: block; width: 52px; height: 23px; margin-top: 3px; padding: 0; font: 13px "Noto Sans CJK SC", sans-serif; background: #f0f0f0; color: #111; border: 1px solid #666; border-right-width: 2px; border-bottom-width: 2px; }

.main { flex: 1; min-height: 0; display: flex; }
.panel { width: 258px; flex: none; padding-top: 2px; display: flex; flex-direction: column; }
.panel-title { height: 16px; background: #0c42d8; color: #fff; display: flex; align-items: center; font-size: 13px; line-height: 16px; }
.panel-title span { flex: 1; }
.pt-i { width: 10px; height: 10px; margin-right: 9px; flex: none; }
.panel-btn { height: 23px; line-height: 19px; text-align: center; border: 1px solid #a8a8a8; border-top-color: #c8c8c8; background: #f2f2f2; font-size: 12px; flex: none; }
.tree-tools { height: 27px; display: flex; align-items: center; gap: 7px; padding-left: 7px; padding-bottom: 2px; flex: none; }
.tt { width: 16px; height: 14px; }
.tree { flex: none; height: 486px; margin: 0 1px 3px 2px; background: #fff; border: 1px solid #a0a0a0; font-size: 12px; }
.t, .c { height: 16px; display: flex; align-items: center; line-height: 16px; position: relative; }
.t { padding-left: 9px; }
.t::after { content: ""; position: absolute; left: 18px; top: 8px; width: 4px; border-top: 1px dotted #888; }
.tw { width: 6px; height: 6px; border: solid #aaa; border-width: 0 2px 2px 0; transform: rotate(-45deg); margin: 0 7px 0 1px; flex: none; }
.open .tw { border-color: #555; transform: rotate(45deg) translate(-1px, -1px); }
.f { width: 15px; height: 15px; flex: none; margin-right: 6px; position: relative; z-index: 1; }
.group { position: relative; padding-left: 40px; }
.group::before { content: ""; position: absolute; left: 12px; top: 0; bottom: 8px; border-left: 1px dotted #888; }
.group::after { content: ""; position: absolute; left: 30px; top: -4px; bottom: 8px; border-left: 1px dotted #888; }
.c { padding-left: 3px; width: 81px; white-space: nowrap; }
.c .f { margin-right: 5px; }
.c::before { content: ""; position: absolute; left: -9px; top: 8px; width: 12px; border-top: 1px dotted #888; }
.sel { background: #d9d9d9; }
.lat { font: 10px "Liberation Mono", monospace; }
.f.cad { margin: 0 0 0 6px; }
.newtag { font: bold 9px "Liberation Sans", sans-serif; color: #333; background: #ffef50; align-self: flex-start; line-height: 9px; margin-left: 1px; }

.work { flex: 1; min-width: 0; margin-left: 5px; display: flex; flex-direction: column; }
.canvas { flex: 1; min-height: 0; background: #000; }
.cad-view { display: block; width: 1102px; height: 465px; }
.cad-lbl text { font: 13px "Liberation Sans", sans-serif; fill: #e0e0e0; text-anchor: middle; }
.cad-lbl text.dim-lbl { fill: #8a8a9a; }
.cad-dim { font: 15px "Liberation Sans", sans-serif; fill: #c8c8c8; }
.cad-num { font: 30px "Lato", "Liberation Sans", sans-serif; fill: #f0f0f0; }
.num-wide { fill: #d8d8d8; }
.zero { fill: #b850b8; }
```
